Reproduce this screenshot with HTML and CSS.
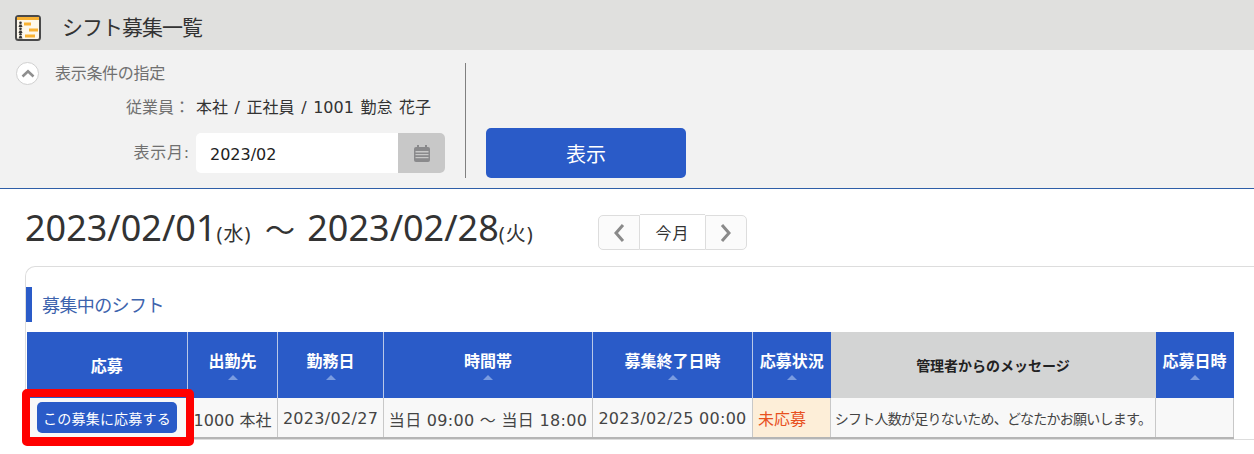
FILE: index.html
```html
<!DOCTYPE html>
<html lang="ja">
<head>
    <meta charset="UTF-8">
    <title>シフト募集一覧</title>
    <link rel="stylesheet" href="styles.css">
</head>
<body>
    <div class="title-bar">
        <svg class="title-icon" width="26" height="26" viewBox="0 0 26 26">
            <rect x="1" y="1" width="24" height="24" rx="2.5" fill="#fdf8ec" stroke="#4a4a4a" stroke-width="2"/>
            <rect x="2" y="2" width="22" height="3" fill="#f9b233"/>
            <circle cx="5.5" cy="7.8" r="1.3" fill="#333"/>
            <path d="M3.5 12 L4.5 9.5 H6.5 L7.5 12z" fill="#333"/>
            <circle cx="5.5" cy="13.8" r="1.3" fill="#333"/>
            <path d="M3.5 18 L4.5 15.5 H6.5 L7.5 18z" fill="#333"/>
            <circle cx="5.5" cy="19.3" r="1.3" fill="#333"/>
            <path d="M3.5 23.5 L4.5 21 H6.5 L7.5 23.5z" fill="#333"/>
            <rect x="9" y="7.5" width="7" height="3" fill="#f9b233"/>
            <rect x="14" y="13.5" width="9" height="3" fill="#f9b233"/>
            <rect x="10" y="19.5" width="10" height="3" fill="#f9b233"/>
        </svg>
        <h1>シフト募集一覧</h1>
    </div>

    <div class="filter">
        <div class="filter-left">
            <div class="filter-head">
                <span class="toggle">
                    <svg width="14" height="9" viewBox="0 0 14 9"><path d="M1.5 7.5 L7 2.2 L12.5 7.5" fill="none" stroke="#8f8f8f" stroke-width="2.6"/></svg>
                </span>
                <span class="filter-title">表示条件の指定</span>
            </div>
            <div class="filter-row emp-row">
                <span class="filter-label">従業員：</span>
                <span class="filter-value">本社 / 正社員 / 1001 勤怠 花子</span>
            </div>
            <div class="filter-row month-row">
                <span class="filter-label month-label">表示月:</span>
                <div class="month-input">
                    <span class="month-text">2023/02</span>
                    <span class="cal-btn">
                        <svg width="18" height="17" viewBox="0 0 18 17">
                            <path d="M1 4 a2 2 0 0 1 2-2 h12 a2 2 0 0 1 2 2 v11 a2 2 0 0 1-2 2 h-12 a2 2 0 0 1-2-2z" fill="#8a8a8c"/>
                            <rect x="4" y="0" width="2" height="4" fill="#8a8a8c"/>
                            <rect x="12" y="0" width="2" height="4" fill="#8a8a8c"/>
                            <rect x="2.5" y="6" width="13" height="1.5" fill="#c8c8c8"/>
                            <rect x="2.5" y="9" width="13" height="1.2" fill="#c8c8c8"/>
                            <rect x="2.5" y="12" width="13" height="1.2" fill="#c8c8c8"/>
                        </svg>
                    </span>
                </div>
            </div>
        </div>
        <div class="filter-right">
            <button class="show-btn">表示</button>
        </div>
    </div>

    <div class="period">
        <div class="period-text">2023/02/01<small>(水)</small> <span class="tilde">～</span> 2023/02/28<small>(火)</small></div>
        <div class="month-nav">
            <span class="nav-btn nav-prev"><svg width="12" height="20" viewBox="0 0 12 20"><path d="M10 2 L3 10 L10 18" fill="none" stroke="#8a8a8a" stroke-width="3"/></svg></span>
            <span class="nav-now">今月</span>
            <span class="nav-btn nav-next"><svg width="12" height="20" viewBox="0 0 12 20"><path d="M2 2 L9 10 L2 18" fill="none" stroke="#8a8a8a" stroke-width="3"/></svg></span>
        </div>
    </div>

    <div class="card">
        <h2 class="card-title">募集中のシフト</h2>
        <table class="shift-table">
            <thead>
                <tr>
                    <th class="col-apply">応募</th>
                    <th class="col-place">出勤先<i class="sort"></i></th>
                    <th class="col-date">勤務日<i class="sort"></i></th>
                    <th class="col-time">時間帯<i class="sort"></i></th>
                    <th class="col-end">募集終了日時<i class="sort"></i></th>
                    <th class="col-status">応募状況<i class="sort"></i></th>
                    <th class="col-msg">管理者からのメッセージ</th>
                    <th class="col-applied">応募日時<i class="sort"></i></th>
                </tr>
            </thead>
            <tbody>
                <tr>
                    <td class="cell-apply"><button class="apply-btn">この募集に応募する</button></td>
                    <td class="cell-text">1000 本社</td>
                    <td class="cell-text cell-num">2023/02/27</td>
                    <td class="cell-text cell-num">当日 09:00 ～ 当日 18:00</td>
                    <td class="cell-text cell-num">2023/02/25 00:00</td>
                    <td class="cell-status">未応募</td>
                    <td class="cell-msg">シフト人数が足りないため、どなたかお願いします。</td>
                    <td></td>
                </tr>
            </tbody>
        </table>
        <div class="highlight"></div>
    </div>
</body>
</html>
```

FILE: styles.css
```css
* {
    box-sizing: border-box;
}

html, body {
    height: 454px;
    overflow: hidden;
}

body {
    margin: 0;
    font-family: "DejaVu Sans", "Noto Sans CJK JP", sans-serif;
    color: #333;
    background-color: #fff;
}

.title-bar {
    height: 50px;
    background-color: #e0e0de;
    display: flex;
    align-items: center;
    padding: 5px 0 0 15px;
}

.title-icon {
    margin-right: 21px;
}

.title-bar h1 {
    margin: 0 0 3px;
    font-size: 21px;
    font-weight: normal;
    font-family: "Noto Sans CJK JP", sans-serif;
    letter-spacing: -1px;
    color: #333;
}

.filter {
    height: 139px;
    background-color: #f2f2f2;
    border-bottom: 1px solid #2f5fa8;
    display: flex;
    padding-top: 13px;
}

.filter-left {
    width: 466px;
    height: 115px;
    border-right: 1px solid #808080;
}

.filter-head {
    display: flex;
    align-items: center;
    padding-left: 16px;
    height: 20px;
}

.toggle {
    width: 23px;
    height: 23px;
    border-radius: 50%;
    background-color: #fff;
    border: 1px solid #d0d0d0;
    display: flex;
    align-items: center;
    justify-content: center;
    margin-right: 16px;
}

.filter-title {
    font-size: 16px;
    letter-spacing: -0.3px;
    color: #707070;
    padding-bottom: 3px;
}

.filter-row {
    display: flex;
    align-items: center;
}

.emp-row {
    margin-top: 13px;
    height: 20px;
}

.month-row {
    margin-top: 17px;
}

.filter-label {
    width: 190px;
    text-align: right;
    font-size: 16px;
    color: #707070;
}

.month-label {
    padding-bottom: 4px;
    letter-spacing: 0.8px;
}

.filter-value {
    margin-left: 6px;
    font-size: 16px;
    word-spacing: 1.5px;
    color: #333;
}

.month-input {
    margin-left: 6px;
    width: 249px;
    height: 40px;
    border-radius: 5px;
    background-color: #fff;
    display: flex;
    align-items: center;
    justify-content: space-between;
    overflow: hidden;
}

.month-text {
    padding: 2px 0 0 14px;
    font-size: 16px;
    color: #222;
}

.cal-btn {
    width: 47px;
    height: 40px;
    background-color: #c8c8c8;
    display: flex;
    align-items: center;
    justify-content: center;
}

.filter-right {
    padding: 65px 0 0 20px;
}

.show-btn {
    width: 200px;
    height: 50px;
    border: 0;
    border-radius: 5px;
    background-color: #2a5bc8;
    color: #fff;
    font-size: 20px;
    font-family: "Noto Sans CJK JP", sans-serif;
}

.period {
    display: flex;
    align-items: center;
    height: 77px;
    padding-left: 25px;
}

.period-text {
    font-size: 36px;
    font-family: "Noto Sans", "Noto Sans CJK JP", sans-serif;
    color: #333;
    width: 573px;
    white-space: nowrap;
}

.period-text small {
    font-size: 20px;
    letter-spacing: 1px;
}

.tilde {
    font-size: 30px;
    margin: 0 3px 0 4px;
}

.month-nav {
    display: flex;
    align-items: stretch;
    height: 35px;
    margin-top: 10px;
}

.nav-btn {
    width: 42px;
    background-color: #fbfbfb;
    border: 1px solid #ddd;
    display: flex;
    align-items: center;
    justify-content: center;
}

.nav-prev {
    border-radius: 5px 0 0 5px;
}

.nav-next {
    border-radius: 0 5px 5px 0;
}

.nav-now {
    width: 65px;
    border-top: 1px solid #ddd;
    border-bottom: 1px solid #ddd;
    display: flex;
    align-items: center;
    justify-content: center;
    font-size: 16px;
    letter-spacing: 1px;
    margin-top: -1px;
    color: #333;
}

.card {
    position: relative;
    margin-left: 25px;
    height: 174px;
    border: 1px solid #ddd;
    border-right: 0;
    border-radius: 10px 0 0 0;
    padding-top: 20px;
}

.card-title {
    margin: 0;
    height: 35px;
    border-left: 6px solid #2a5bc8;
    padding-left: 10px;
    font-size: 18px;
    font-weight: normal;
    line-height: 35px;
    letter-spacing: -0.6px;
    font-family: "Noto Sans CJK JP", sans-serif;
    color: #3d63ad;
}

.shift-table {
    margin: 10px 0 0 0;
    border-collapse: collapse;
    table-layout: fixed;
    width: 1207px;
    font-size: 16px;
}

.shift-table th {
    height: 66px;
    background-color: #2a5bc8;
    color: #fff;
    font-size: 16px;
    font-weight: bold;
    padding: 0 0 10px;
    border-left: 1px solid #b9c8e8;
    vertical-align: middle;
    font-family: "Noto Sans CJK JP", sans-serif;
    white-space: nowrap;
    position: relative;
}

.shift-table th:first-child {
    border-left: 0;
    padding-bottom: 0;
}

.sort {
    position: absolute;
    left: 50%;
    bottom: 18px;
    margin-left: -5px;
    border-left: 5px solid transparent;
    border-right: 5px solid transparent;
    border-bottom: 5px solid #7a9ce0;
}

.shift-table th.col-msg {
    background-color: #d3d4d4;
    color: #222;
    font-size: 14px;
    padding-bottom: 0;
    border-left: 0;
}

.shift-table th.col-applied {
    border-left: 0;
}

.shift-table td {
    height: 40px;
    background-color: #f8f8f8;
    border-left: 1px solid #c8c8c8;
    border-right: 1px solid #c8c8c8;
    border-bottom: 2px solid #b5b5b5;
    font-size: 16px;
    color: #444;
    text-align: center;
    white-space: nowrap;
    padding: 0;
}

.col-apply { width: 161px; }
.col-place { width: 90px; }
.col-date { width: 106px; }
.col-time { width: 209px; }
.col-end { width: 160px; }
.col-status { width: 78px; }
.col-msg { width: 325px; }
.col-applied { width: 78px; }

.shift-table td.cell-text {
    padding-top: 2px;
}

.shift-table td.cell-num {
    letter-spacing: 0.3px;
}

.shift-table td.cell-status {
    background-color: #fdeed8;
    color: #e8501e;
    text-align: left;
    padding-left: 5px;
    font-size: 16px;
    font-family: "Noto Sans CJK JP", sans-serif;
}

.shift-table td.cell-msg {
    font-size: 14px;
    font-family: "Noto Sans CJK JP", sans-serif;
    letter-spacing: -0.75px;
    color: #444;
}

.apply-btn {
    width: 140px;
    height: 31px;
    border: 0;
    border-radius: 5px;
    background-color: #2a5bc8;
    color: #fff;
    font-size: 14px;
    letter-spacing: 0.2px;
    font-family: "Noto Sans CJK JP", sans-serif;
    padding: 0;
}

/* red annotation box drawn over the first cell */
.highlight {
    position: absolute;
    left: -4px;
    top: 122px;
    width: 172px;
    height: 57px;
    border: 8px solid #f00;
    border-bottom-width: 9px;
    border-radius: 5px;
}
```
